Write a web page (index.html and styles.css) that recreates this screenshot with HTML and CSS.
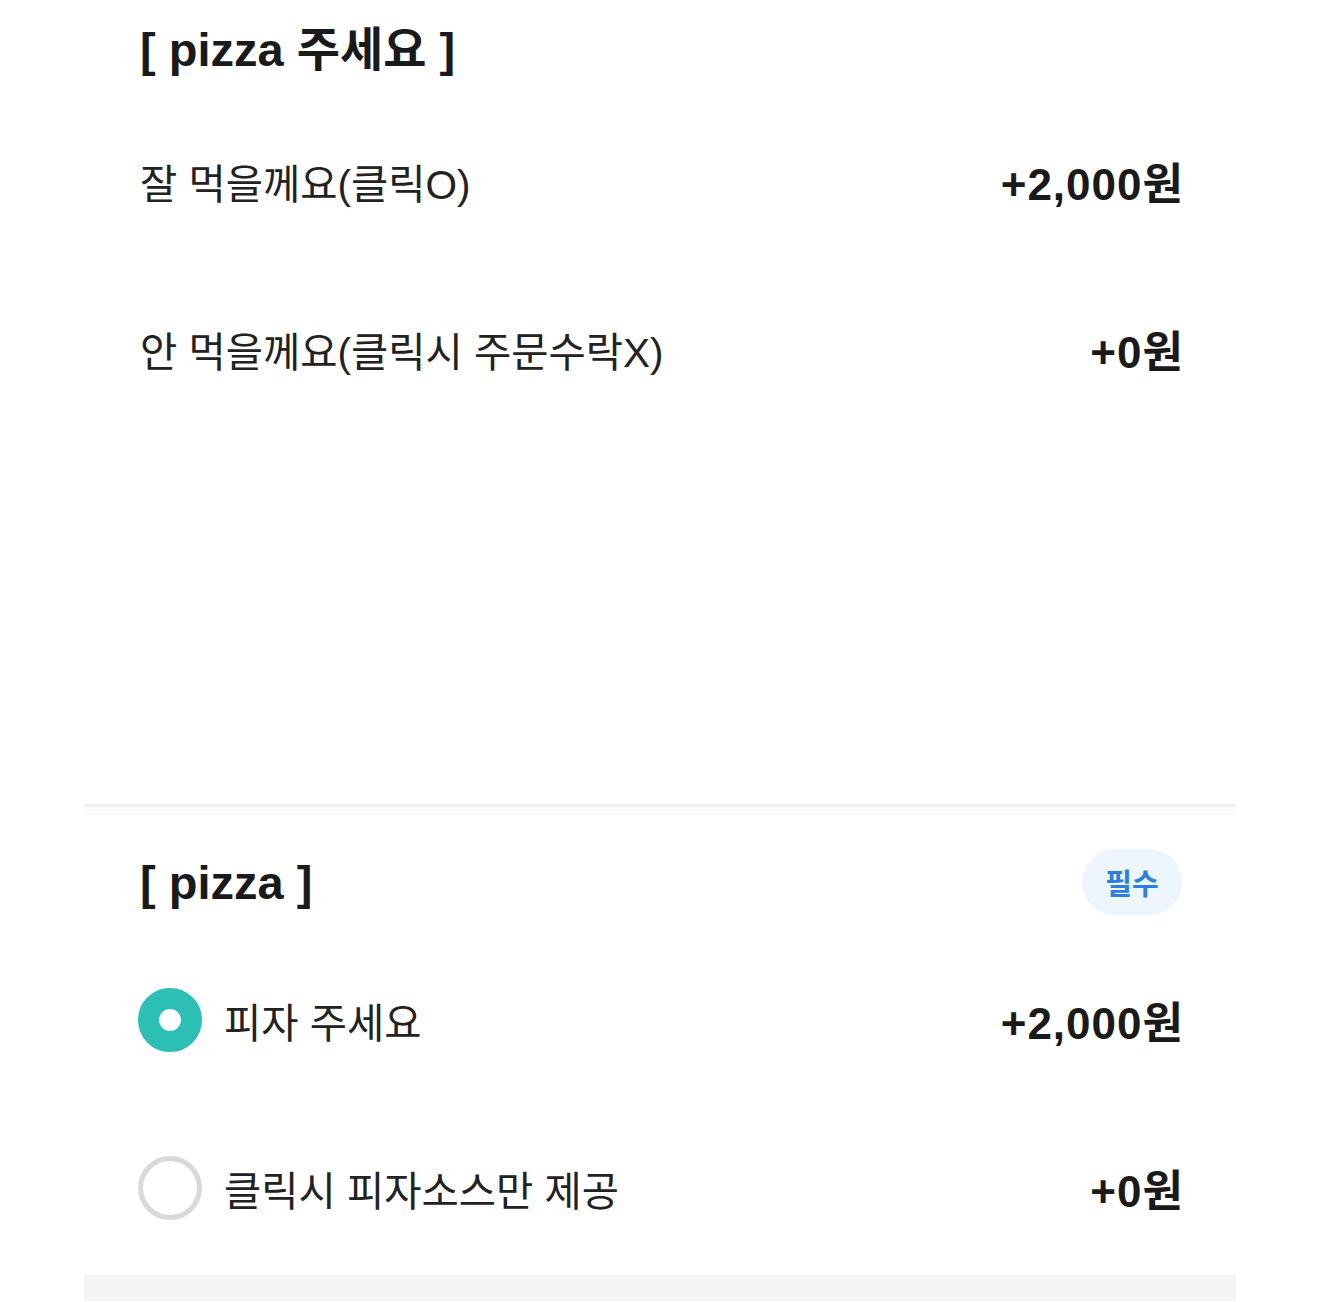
FILE: index.html
```html
<!DOCTYPE html>
<html lang="ko">
<head>
<meta charset="utf-8">
<link rel="stylesheet" href="styles.css">
</head>
<body>
<div class="page">
  <section class="group group-first">
    <div class="group-head">
      <h2 class="group-title">[ pizza 주세요 ]</h2>
    </div>
    <ul class="options">
      <li class="option"><span class="label">잘 먹을께요(클릭O)</span><span class="price">+2,000원</span></li>
      <li class="option"><span class="label">안 먹을께요(클릭시 주문수락X)</span><span class="price">+0원</span></li>
    </ul>
  </section>
  <div class="divider"></div>
  <section class="group group-second">
    <div class="group-head">
      <h2 class="group-title">[ pizza ]</h2>
      <span class="badge">필수</span>
    </div>
    <ul class="options">
      <li class="option"><span class="radio checked"></span><span class="label">피자 주세요</span><span class="price">+2,000원</span></li>
      <li class="option"><span class="radio"></span><span class="label">클릭시 피자소스만 제공</span><span class="price">+0원</span></li>
    </ul>
  </section>
  <div class="footer-strip"></div>
</div>
</body>
</html>
```
FILE: styles.css
```css
* { box-sizing: border-box; }
html, body { margin: 0; padding: 0; background: #ffffff; }
body {
  font-family: "Liberation Sans", "Noto Sans CJK KR", sans-serif;
  color: #1e1e1e;
  width: 1320px;
  height: 1302px;
  overflow: hidden;
}
.page {
  width: 1152px;
  margin-left: 84px;
}
.group { padding: 0 56px; }
.group-first { height: 804px; }
.group-head {
  display: flex;
  align-items: center;
  justify-content: space-between;
}
.group-first .group-head { height: 90px; }
.group-second { padding-top: 42px; margin-top: -8px; }
.group-second .group-head { height: 66px; }
.group-title {
  margin: 0;
  font-size: 47px;
  font-weight: 700;
  color: #1a1a1a;
}
.badge {
  display: inline-flex;
  align-items: center;
  justify-content: center;
  width: 100px;
  height: 66px;
  margin-right: -2px;
  border-radius: 33px;
  background: #edf5fd;
  color: #2b7fe0;
  font-size: 29px;
  font-weight: 700;
}
.options { list-style: none; margin: 0; padding: 0; }
.group-first .options { margin-top: 7px; }
.group-second .options { margin-top: 21px; }
.option {
  display: flex;
  align-items: center;
  height: 168px;
}
.label {
  flex: 1;
  font-size: 40.5px;
  font-weight: 400;
  color: #222;
}
.price {
  font-size: 44px;
  font-weight: 700;
  letter-spacing: 1px;
  margin-right: -4px;
  color: #1a1a1a;
}
.radio {
  width: 64px;
  height: 64px;
  border-radius: 50%;
  border: 5px solid #d9d9d9;
  margin-right: 22px;
  margin-left: -2px;
  flex: none;
}
.radio.checked {
  border: 21px solid #2cbfb4;
  background: #fff;
}
.divider {
  height: 3px;
  background: #efefef;
  border-bottom: 8px solid #fafafa;
  box-sizing: content-box;
}
.footer-strip {
  height: 26px;
  margin-top: 3px;
  background: #f2f3f5;
}
```
